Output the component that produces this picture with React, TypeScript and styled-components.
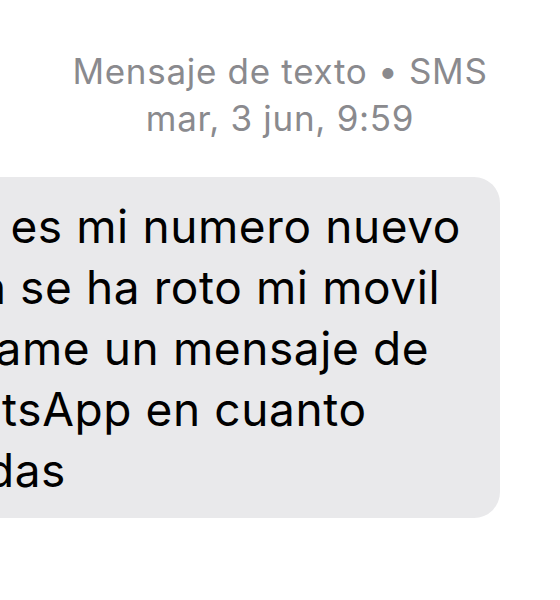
import React from "react";
import styled, { createGlobalStyle } from "styled-components";

const GlobalStyle = createGlobalStyle`
  html, body {
    margin: 0;
    padding: 0;
    background: #fff;
  }
  body {
    font-family: Inter, "Noto Sans", "DejaVu Sans", sans-serif;
    -webkit-font-smoothing: antialiased;
  }
`;

const Screen = styled.div`
  width: 560px;
  height: 600px;
  overflow: hidden;
  background: #fff;
  display: flex;
  flex-direction: column;
`;

const Header = styled.div`
  padding-top: 48px;
  text-align: center;
  color: #8a8a8e;
  font-size: 35px;
  line-height: 47px;
  letter-spacing: 0.7px;
`;

const BubbleRow = styled.div`
  display: flex;
  justify-content: flex-end;
  padding-right: 60px;
  margin-top: 35px;
`;

const Bubble = styled.div`
  flex-shrink: 0;
  background: #e9e9eb;
  border-radius: 26px;
  padding: 19px 39px 17px 30px;
  color: #000;
  font-size: 46px;
  line-height: 61px;
  letter-spacing: 0.6px;
  white-space: nowrap;
`;

const Line = styled.div``;

const mensaje = [
  "este es mi numero nuevo",
  "vaya se ha roto mi movil",
  "Envíame un mensaje de",
  "WhatsApp en cuanto",
  "puedas",
];

const App = () => {
  return (
    <>
      <GlobalStyle />
      <Screen>
        <Header>
          <div>Mensaje de texto • SMS</div>
          <div>mar, 3 jun, 9:59</div>
        </Header>
        <BubbleRow>
          <Bubble>
            {mensaje.map((l, i) => (
              <Line key={i}>{l}</Line>
            ))}
          </Bubble>
        </BubbleRow>
      </Screen>
    </>
  );
};

export default App;
